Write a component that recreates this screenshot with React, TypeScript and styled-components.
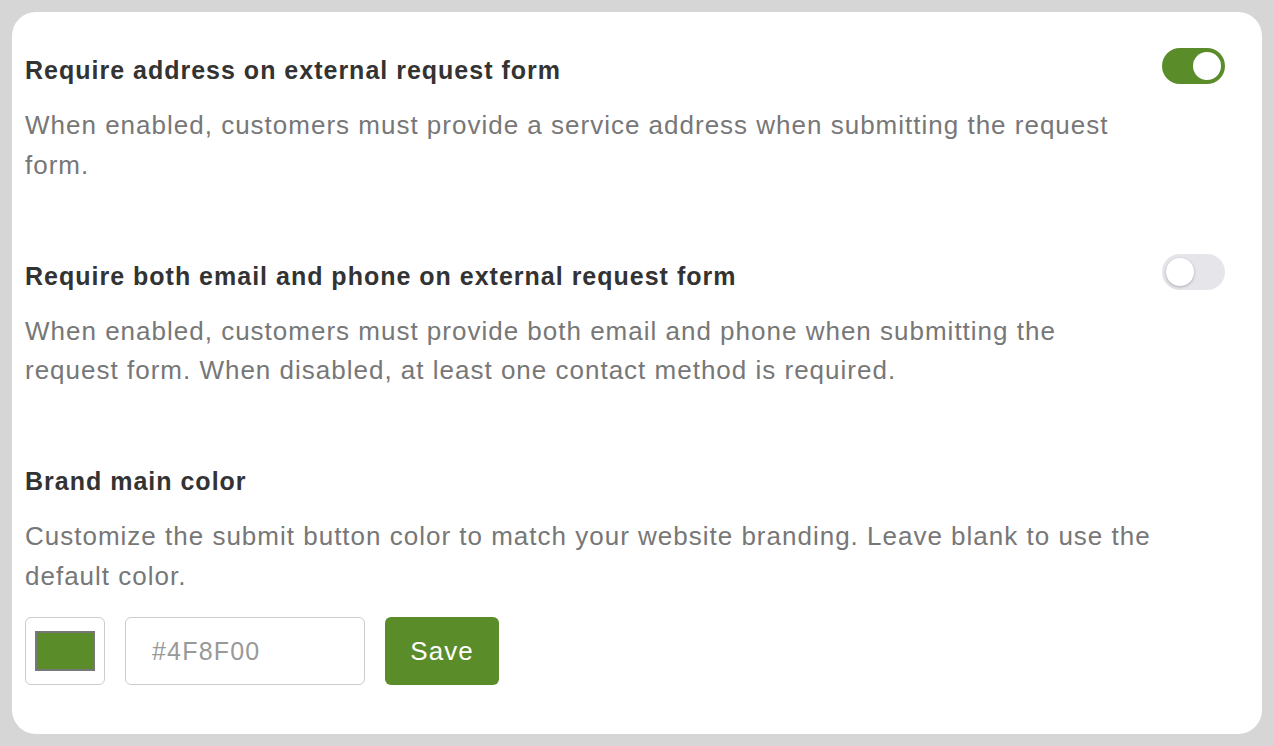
import React from 'react';
import styled, { createGlobalStyle } from 'styled-components';

const GREEN = '#5b8c2a';

const GlobalStyle = createGlobalStyle`
    html, body {
        margin: 0;
        padding: 0;
        background: #d6d6d6;
    }
    body {
        font-family: "Liberation Sans", Arial, Helvetica, sans-serif;
        -webkit-font-smoothing: antialiased;
    }
    * {
        box-sizing: border-box;
    }
`;

const Page = styled.div`
    padding: 12px;
    min-height: 746px;
`;

const Card = styled.div`
    background: #ffffff;
    border-radius: 24px;
    padding: 40px 37px 49px 13px;
    display: flex;
    flex-direction: column;
    gap: 72.5px;
`;

const Section = styled.section`
    display: flex;
    flex-direction: column;
`;

const HeaderRow = styled.div`
    display: flex;
    align-items: flex-start;
    justify-content: space-between;
`;

const Title = styled.h2`
    margin: 0;
    font-size: 25px;
    line-height: 36px;
    font-weight: 700;
    letter-spacing: 1px;
    color: #333333;
`;

const Description = styled.p`
    margin: 18px 0 0;
    max-width: 1128px;
    font-size: 26px;
    line-height: 39.5px;
    font-weight: 400;
    letter-spacing: 1px;
    color: #777777;
`;

const SwitchTrack = styled.button<{ $on: boolean }>`
    position: relative;
    flex-shrink: 0;
    width: 63px;
    height: 36px;
    margin-top: -4px;
    padding: 0;
    border: none;
    border-radius: 18px;
    background: ${p => (p.$on ? GREEN : '#e5e5ea')};
    cursor: pointer;
`;

const SwitchKnob = styled.span<{ $on: boolean }>`
    position: absolute;
    top: 4px;
    left: ${p => (p.$on ? '31px' : '4px')};
    width: 28px;
    height: 28px;
    border-radius: 50%;
    background: #ffffff;
    box-shadow: ${p => (p.$on ? 'none' : '0 1px 3px rgba(0, 0, 0, 0.25)')};
    transition: left 0.15s ease;
`;

const Controls = styled.div`
    display: flex;
    align-items: center;
    gap: 20px;
    margin-top: 21px;
`;

const SwatchBox = styled.div`
    width: 80px;
    height: 68px;
    border: 1px solid #cccccc;
    border-radius: 6px;
    display: flex;
    align-items: center;
    justify-content: center;
    background: #ffffff;
`;

const Swatch = styled.div<{ $color: string }>`
    width: 60px;
    height: 40px;
    background: ${p => p.$color};
    border: 2px solid #777777;
`;

const HexInput = styled.input`
    width: 240px;
    height: 68px;
    border: 1px solid #cccccc;
    border-radius: 6px;
    padding: 0 0 0 26px;
    font-family: inherit;
    font-size: 25px;
    letter-spacing: 1.2px;
    color: #333333;
    outline: none;

    &::placeholder {
        color: #999999;
    }
`;

const SaveButton = styled.button`
    width: 114px;
    height: 68px;
    border: none;
    border-radius: 6px;
    background: ${GREEN};
    color: #ffffff;
    font-family: inherit;
    font-size: 26px;
    letter-spacing: 1px;
    cursor: pointer;
`;

interface ToggleProps {
    on: boolean;
    onChange: (v: boolean) => void;
}

const Toggle = ({ on, onChange }: ToggleProps) => (
    <SwitchTrack $on={on} onClick={() => onChange(!on)} aria-pressed={on}>
        <SwitchKnob $on={on} />
    </SwitchTrack>
);

export default function App() {
    const [requireAddress, setRequireAddress] = React.useState(true);
    const [requireBoth, setRequireBoth] = React.useState(false);
    const [hex, setHex] = React.useState('');

    return (
        <Page>
            <GlobalStyle />
            <Card>
                <Section>
                    <HeaderRow>
                        <Title>Require address on external request form</Title>
                        <Toggle on={requireAddress} onChange={setRequireAddress} />
                    </HeaderRow>
                    <Description>
                        When enabled, customers must provide a service address when submitting the request form.
                    </Description>
                </Section>
                <Section>
                    <HeaderRow>
                        <Title>Require both email and phone on external request form</Title>
                        <Toggle on={requireBoth} onChange={setRequireBoth} />
                    </HeaderRow>
                    <Description>
                        When enabled, customers must provide both email and phone when submitting the request form.
                        When disabled, at least one contact method is required.
                    </Description>
                </Section>
                <Section>
                    <Title>Brand main color</Title>
                    <Description>
                        Customize the submit button color to match your website branding. Leave blank to use the
                        default color.
                    </Description>
                    <Controls>
                        <SwatchBox>
                            <Swatch $color={GREEN} />
                        </SwatchBox>
                        <HexInput
                            placeholder="#4F8F00"
                            value={hex}
                            onChange={e => setHex(e.target.value)}
                        />
                        <SaveButton>Save</SaveButton>
                    </Controls>
                </Section>
            </Card>
        </Page>
    );
}
